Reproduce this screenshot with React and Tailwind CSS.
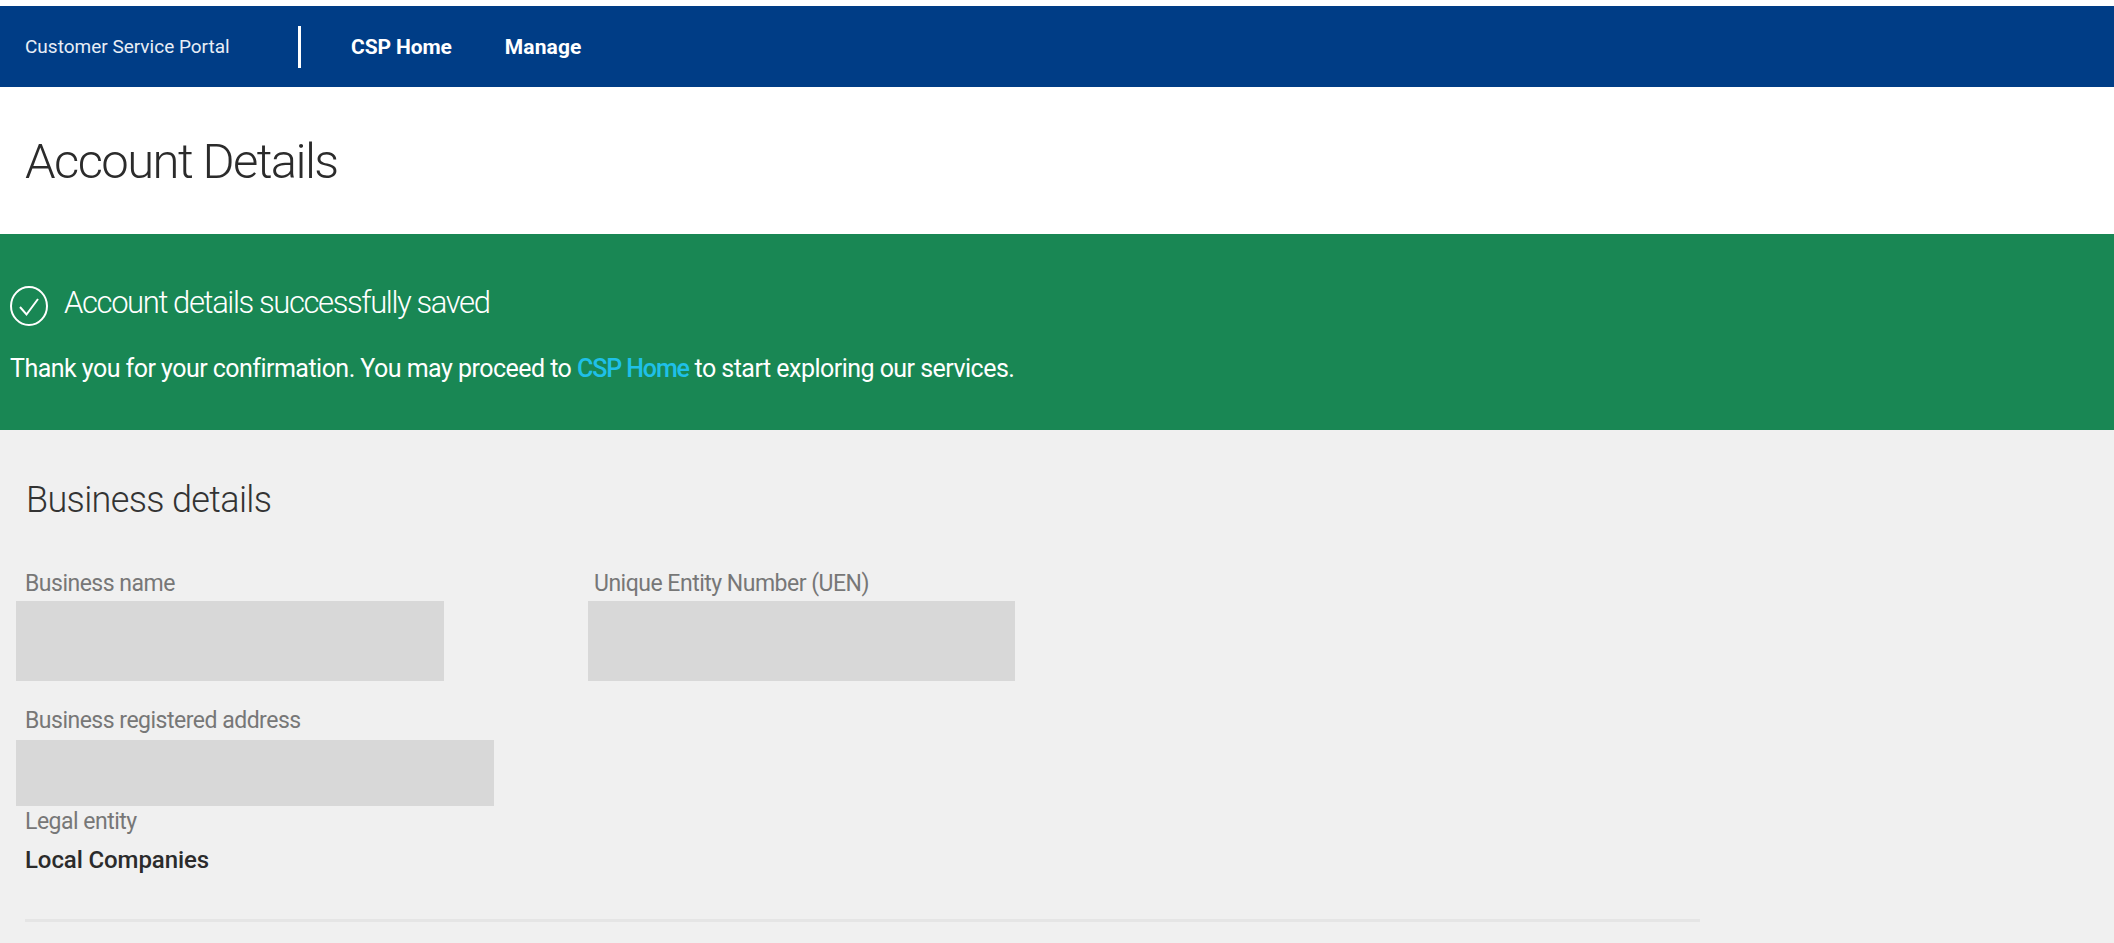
import React from 'react';

const Label = ({ children, className = '' }) => (
  <p className={`text-[23px] leading-[26px] text-[#777777] tracking-[-0.5px] ${className}`}>{children}</p>
);

const Redacted = ({ width, height }) => (
  <div className={`${width} ${height} bg-[#d8d8d8]`} />
);

export default function App() {
  return (
    <div className="h-[943px] overflow-hidden bg-[#f0f0f0] font-['Roboto',sans-serif]">
      <div className="h-[6px] bg-white" />

      {/* Header */}
      <div className="h-[81px] bg-[#003d86] flex items-center text-white pt-[1px]">
        <span className="ml-[25px] w-[273px] text-[19px] tracking-[0px] text-[#e8eef6]">Customer Service Portal</span>
        <div className="w-[3px] h-[42px] bg-white -mt-[1px]" />
        <a className="ml-[50px] pt-[1px] text-[21px] font-bold tracking-[-0.1px]">CSP Home</a>
        <a className="ml-[53px] pt-[1px] text-[21px] font-bold tracking-[0.1px]">Manage</a>
      </div>

      {/* Title */}
      <div className="h-[147px] bg-white flex items-center pl-[25px] pt-[3px]">
        <h1 className="text-[49px] font-light text-[#2b2b2b] tracking-[-1.6px]">Account Details</h1>
      </div>

      {/* Success banner */}
      <div className="h-[196px] bg-[#198754] text-white pl-[10px] pt-[51px]">
        <div className="flex items-center gap-[16px]">
          <svg width="38" height="40" viewBox="0 0 38 40" fill="none" stroke="currentColor" strokeWidth="2">
            <ellipse cx="19" cy="20" rx="18" ry="19" />
            <path d="M10 21l6.500 7.500L28 13" />
          </svg>
          <h2 className="text-[31px] font-light tracking-[-1.4px] -mt-[5px]">Account details successfully saved</h2>
        </div>
        <p className="mt-[24px] text-[25px] leading-[36px] tracking-[-0.53px]">
          Thank you for your confirmation. You may proceed to <a className="text-[#1fc0e8] font-medium tracking-[-1.1px]">CSP Home</a> to start exploring our services.
        </p>
      </div>

      {/* Business details */}
      <div className="pt-[48px]">
        <h2 className="pl-[26px] text-[36px] leading-[44px] font-light text-[#333333] tracking-[-0.65px]">Business details</h2>

        <div className="mt-[49px] flex pl-[16px] gap-[144px]">
          <div>
            <Label className="pl-[9px] mb-[4px]">Business name</Label>
            <Redacted width="w-[428px]" height="h-[80px]" />
          </div>
          <div>
            <Label className="pl-[6px] mb-[4px]">Unique Entity Number (UEN)</Label>
            <Redacted width="w-[427px]" height="h-[80px]" />
          </div>
        </div>

        <div className="mt-[27px] pl-[16px]">
          <Label className="pl-[9px] mb-[6px]">Business registered address</Label>
          <Redacted width="w-[478px]" height="h-[66px]" />
        </div>

        <div className="mt-[3px] pl-[25px]">
          <Label>Legal entity</Label>
          <p className="mt-[12px] text-[24px] leading-[26px] font-medium text-[#2b2b2b] tracking-[-0.1px]">Local Companies</p>
        </div>

        <div className="mt-[46px] ml-[25px] w-[1675px] h-[3px] bg-[#e5e5e5]" />
      </div>
    </div>
  );
}
